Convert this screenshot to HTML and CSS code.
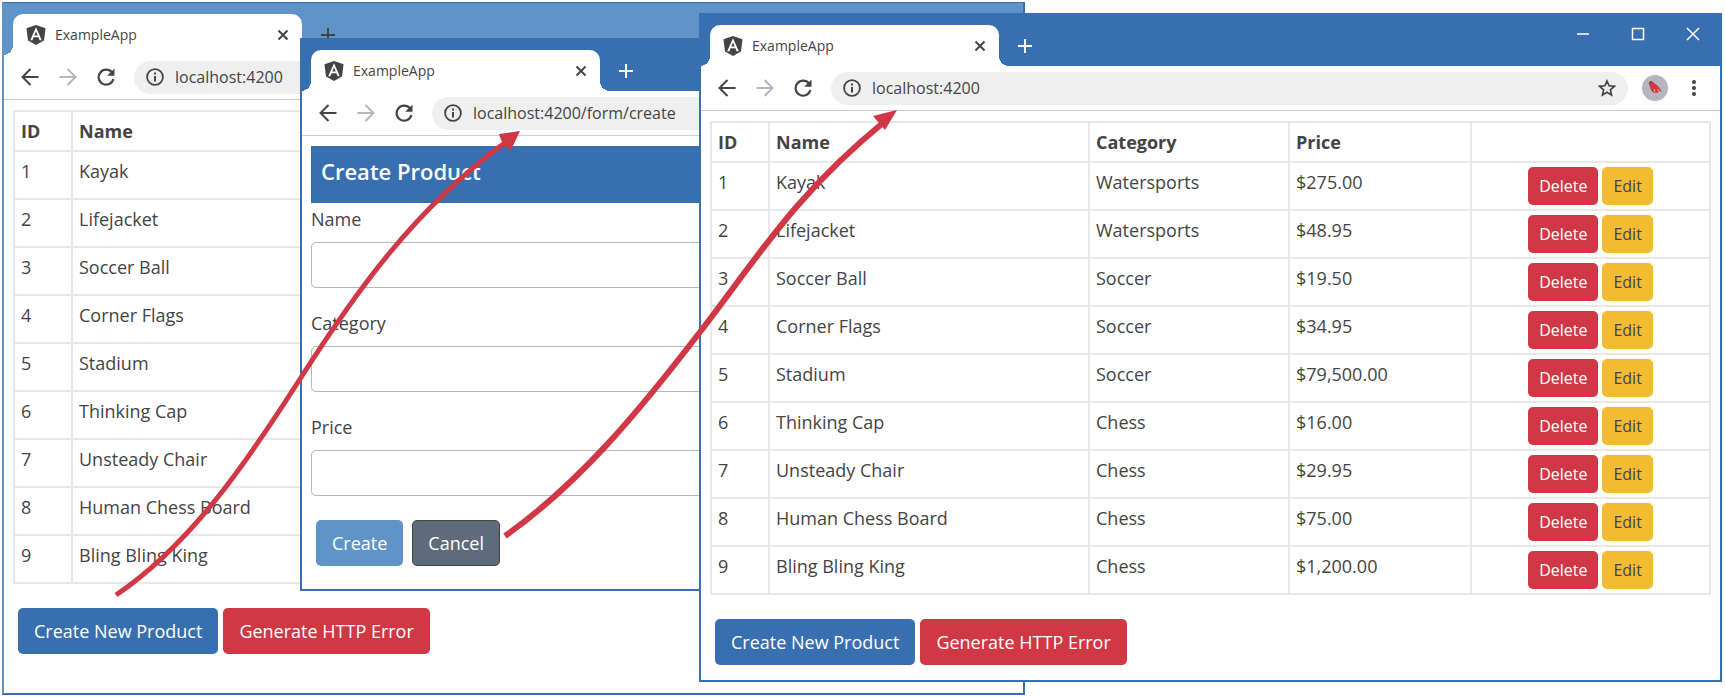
FILE: index.html
```
<!DOCTYPE html>
<html lang="en">
<head>
<meta charset="utf-8">
<title>ExampleApp</title>
<link rel="stylesheet" href="styles.css">
</head>
<body>
<svg class="symbols" aria-hidden="true">
  <symbol id="logo" viewBox="0 0 20 20"><path fill="#444" d="M10 0 19.5 3.3 18 15.6 10 20 2 15.6.5 3.3z"/><path fill="#fff" d="M10 2.3 4.2 15.2h2.2l1.2-2.9h4.8l1.2 2.9h2.2zm0 4.1 1.7 4.1H8.3z"/></symbol>
  <symbol id="close" viewBox="0 0 12 12"><path d="m1.500 1.500 9 9m0-9-9 9" fill="none" stroke="currentColor" stroke-width="2"/></symbol>
  <symbol id="plus" viewBox="0 0 16 16"><path d="M8 1v14M1 8h14" fill="none" stroke="currentColor" stroke-width="2"/></symbol>
  <symbol id="back" viewBox="0 0 18 18"><path d="M17.500 9H2M9.500 1 1.500 9l8 8" fill="none" stroke="currentColor" stroke-width="2"/></symbol>
  <symbol id="forward" viewBox="0 0 18 18"><path d="M.5 9H16M8.500 1l8 8-8 8" fill="none" stroke="currentColor" stroke-width="2"/></symbol>
  <symbol id="reload" viewBox="0 0 18 18"><path d="M15 4.500A7.500 7.500 0 1 0 16.400 11" fill="none" stroke="currentColor" stroke-width="2.200"/><path d="M17.500.5v7.300h-7.300z" fill="currentColor"/></symbol>
  <symbol id="info" viewBox="0 0 18 18"><circle cx="9" cy="9" r="7.900" fill="none" stroke="currentColor" stroke-width="1.800"/><path d="M8 4.500h2v2H8zM8 8h2v5.500H8z" fill="currentColor"/></symbol>
  <symbol id="star" viewBox="0 0 18 18"><path d="m9 2 2.100 4.800 5.200.5-3.900 3.500 1.100 5.100L9 13.200l-4.500 2.700 1.100-5.100-3.900-3.500 5.200-.5z" fill="none" stroke="currentColor" stroke-width="1.700"/></symbol>
  <symbol id="dots" viewBox="0 0 6 18"><g fill="currentColor"><circle cx="3" cy="3" r="2"/><circle cx="3" cy="9" r="2"/><circle cx="3" cy="15" r="2"/></g></symbol>
  <symbol id="bird" viewBox="0 0 26 26"><circle cx="13" cy="13" r="13" fill="#b5b5bf"/><path d="M7 8.500C7 6.500 9 6 11 7l5 4 4 5.500-3-.5-1 1.500c-3 1-6 0-7.500-3.500z" fill="#d03845"/><path d="m7 8.500 1-1.500 2-.5" stroke="#444" fill="none"/><path d="m12 14 1 3m3-3 .5 2" stroke="#f2bc30"/></symbol>
</svg>

<main class="desktop">
  <section class="window window-list">
    <header class="titlebar">
      <div class="tab"><svg class="logo"><use href="#logo"/></svg><span class="tab-title">ExampleApp</span><button class="icon-button" aria-label="Close tab"><svg class="close"><use href="#close"/></svg></button></div>
      <button class="icon-button new-tab" aria-label="New tab"><svg class="plus"><use href="#plus"/></svg></button>
    </header>
    <nav class="toolbar">
      <button class="icon-button" aria-label="Back"><svg class="icon"><use href="#back"/></svg></button>
      <button class="icon-button muted" aria-label="Forward"><svg class="icon"><use href="#forward"/></svg></button>
      <button class="icon-button" aria-label="Reload"><svg class="icon"><use href="#reload"/></svg></button>
      <div class="address"><svg class="icon"><use href="#info"/></svg><span class="url">localhost:4200</span></div>
    </nav>
    <div class="content">
      <table class="products">
        <thead><tr><th class="col-id">ID</th><th>Name</th></tr></thead>
        <tbody>
          <tr><td>1</td><td>Kayak</td></tr>
          <tr><td>2</td><td>Lifejacket</td></tr>
          <tr><td>3</td><td>Soccer Ball</td></tr>
          <tr><td>4</td><td>Corner Flags</td></tr>
          <tr><td>5</td><td>Stadium</td></tr>
          <tr><td>6</td><td>Thinking Cap</td></tr>
          <tr><td>7</td><td>Unsteady Chair</td></tr>
          <tr><td>8</td><td>Human Chess Board</td></tr>
          <tr><td>9</td><td>Bling Bling King</td></tr>
        </tbody>
      </table>
      <div class="actions"><button class="btn primary">Create New Product</button><button class="btn danger">Generate HTTP Error</button></div>
    </div>
  </section>

  <section class="window window-form">
    <header class="titlebar">
      <div class="tab"><svg class="logo"><use href="#logo"/></svg><span class="tab-title">ExampleApp</span><button class="icon-button" aria-label="Close tab"><svg class="close"><use href="#close"/></svg></button></div>
      <button class="icon-button new-tab" aria-label="New tab"><svg class="plus"><use href="#plus"/></svg></button>
    </header>
    <nav class="toolbar">
      <button class="icon-button" aria-label="Back"><svg class="icon"><use href="#back"/></svg></button>
      <button class="icon-button muted" aria-label="Forward"><svg class="icon"><use href="#forward"/></svg></button>
      <button class="icon-button" aria-label="Reload"><svg class="icon"><use href="#reload"/></svg></button>
      <div class="address"><svg class="icon"><use href="#info"/></svg><span class="url">localhost:4200/form/create</span></div>
    </nav>
    <form class="content">
      <h1 class="banner">Create Product</h1>
      <div class="field"><label for="name">Name</label><input id="name" type="text"></div>
      <div class="field"><label for="category">Category</label><input id="category" type="text"></div>
      <div class="field"><label for="price">Price</label><input id="price" type="text"></div>
      <div class="form-actions"><button type="button" class="btn create">Create</button><button type="button" class="btn cancel">Cancel</button></div>
    </form>
  </section>

  <section class="window window-result">
    <header class="titlebar">
      <div class="tab"><svg class="logo"><use href="#logo"/></svg><span class="tab-title">ExampleApp</span><button class="icon-button" aria-label="Close tab"><svg class="close"><use href="#close"/></svg></button></div>
      <button class="icon-button new-tab" aria-label="New tab"><svg class="plus"><use href="#plus"/></svg></button>
      <div class="controls">
        <button class="icon-button" aria-label="Minimize"><svg class="control" viewBox="0 0 14 14"><path d="M1 7h12"/></svg></button>
        <button class="icon-button" aria-label="Maximize"><svg class="control" viewBox="0 0 14 14"><path d="M1.500 1.500h11v11h-11z"/></svg></button>
        <button class="icon-button" aria-label="Close"><svg class="control" viewBox="0 0 14 14"><path d="m1 1 12 12m0-12L1 13"/></svg></button>
      </div>
    </header>
    <nav class="toolbar">
      <button class="icon-button" aria-label="Back"><svg class="icon"><use href="#back"/></svg></button>
      <button class="icon-button muted" aria-label="Forward"><svg class="icon"><use href="#forward"/></svg></button>
      <button class="icon-button" aria-label="Reload"><svg class="icon"><use href="#reload"/></svg></button>
      <div class="address"><svg class="icon"><use href="#info"/></svg><span class="url">localhost:4200</span><button class="icon-button" aria-label="Bookmark"><svg class="icon"><use href="#star"/></svg></button></div>
      <div class="toolbar-end">
        <button class="icon-button" aria-label="Profile"><svg class="avatar"><use href="#bird"/></svg></button>
        <button class="icon-button" aria-label="Menu"><svg class="dots"><use href="#dots"/></svg></button>
      </div>
    </nav>
    <div class="content">
      <table class="products">
        <thead><tr><th class="col-id">ID</th><th>Name</th><th class="col-category">Category</th><th class="col-price">Price</th><th class="col-actions"></th></tr></thead>
        <tbody>
          <tr><td>1</td><td>Kayak</td><td>Watersports</td><td>$275.00</td><td class="row-actions"><button class="btn-sm danger">Delete</button><button class="btn-sm warning">Edit</button></td></tr>
          <tr><td>2</td><td>Lifejacket</td><td>Watersports</td><td>$48.95</td><td class="row-actions"><button class="btn-sm danger">Delete</button><button class="btn-sm warning">Edit</button></td></tr>
          <tr><td>3</td><td>Soccer Ball</td><td>Soccer</td><td>$19.50</td><td class="row-actions"><button class="btn-sm danger">Delete</button><button class="btn-sm warning">Edit</button></td></tr>
          <tr><td>4</td><td>Corner Flags</td><td>Soccer</td><td>$34.95</td><td class="row-actions"><button class="btn-sm danger">Delete</button><button class="btn-sm warning">Edit</button></td></tr>
          <tr><td>5</td><td>Stadium</td><td>Soccer</td><td>$79,500.00</td><td class="row-actions"><button class="btn-sm danger">Delete</button><button class="btn-sm warning">Edit</button></td></tr>
          <tr><td>6</td><td>Thinking Cap</td><td>Chess</td><td>$16.00</td><td class="row-actions"><button class="btn-sm danger">Delete</button><button class="btn-sm warning">Edit</button></td></tr>
          <tr><td>7</td><td>Unsteady Chair</td><td>Chess</td><td>$29.95</td><td class="row-actions"><button class="btn-sm danger">Delete</button><button class="btn-sm warning">Edit</button></td></tr>
          <tr><td>8</td><td>Human Chess Board</td><td>Chess</td><td>$75.00</td><td class="row-actions"><button class="btn-sm danger">Delete</button><button class="btn-sm warning">Edit</button></td></tr>
          <tr><td>9</td><td>Bling Bling King</td><td>Chess</td><td>$1,200.00</td><td class="row-actions"><button class="btn-sm danger">Delete</button><button class="btn-sm warning">Edit</button></td></tr>
        </tbody>
      </table>
      <div class="actions"><button class="btn primary">Create New Product</button><button class="btn danger">Generate HTTP Error</button></div>
    </div>
  </section>

  <svg class="arrows" width="1000" height="697" viewBox="0 0 1000 697" aria-hidden="true">
    <path class="line" stroke-width="5" d="M116 595C190 545 245 465 300 379S415 208 506 142"/>
    <path class="head" d="m520 131-21 3 2 6 6 8 4 2z"/>
    <path class="line" stroke-width="6" d="M505 536C580 483 640 410 700 332S795 195 884 122"/>
    <path class="head" d="m897 110-24 6 12 14z"/>
  </svg>
</main>
</body>
</html>
```
FILE: styles.css
```
* { box-sizing: border-box; }

body {
  margin: 0;
  background: #fff;
  color: #444;
  font: 18px/28px "Open Sans", "Noto Sans", sans-serif;
}

button, input { font: inherit; color: inherit; }
svg { display: block; }
.symbols { position: absolute; width: 0; height: 0; }

.desktop { position: relative; min-height: 697px; overflow: hidden; }

/* Browser windows */
.window {
  position: absolute;
  background: #fff;
  border: 2px solid #386fb1;
  border-top-width: 1px;
}
.window-list { left: 2px; right: 700px; top: 2px; padding-bottom: 29px; border-left-color: #6094c8; }
.window-form { left: 300px; right: 1000px; top: 38px; padding-bottom: 1px; }
.window-result { left: 699px; right: 3px; top: 13px; padding-bottom: 5px; }

.titlebar { display: flex; height: 52px; padding: 11px 0 0 9px; background: #386fb1; }
.window-list .titlebar { background: #6094c8; }

.tab {
  position: relative;
  display: flex;
  align-items: center;
  gap: 9px;
  width: 289px;
  padding: 0 13px;
  border-radius: 10px 10px 0 0;
  background: #fff;
}
.tab::before, .tab::after {
  content: "";
  position: absolute;
  bottom: 0;
  width: 10px;
  height: 10px;
}
.tab::before { right: 100%; background: radial-gradient(circle at 0 0, transparent 10px, #fff 10px); }
.tab::after { left: 100%; background: radial-gradient(circle at 100% 0, transparent 10px, #fff 10px); }
.tab-title { flex: 1; font-size: 14px; line-height: 20px; }
.logo { width: 20px; height: 20px; }
.close { width: 12px; height: 12px; }
.plus { width: 16px; height: 16px; }
.new-tab { margin-left: 18px; color: #fff; }
.window-list .new-tab { color: #444; }

.icon-button {
  display: grid;
  place-items: center;
  padding: 0;
  border: 0;
  background: none;
}

.controls { display: flex; align-items: center; gap: 41px; height: 18px; margin-left: auto; padding-right: 20px; }
.control { width: 14px; height: 14px; fill: none; stroke: #fff; stroke-width: 1.5; }

.toolbar {
  display: flex;
  align-items: center;
  gap: 20px;
  height: 45px;
  padding: 0 23px 0 17px;
  border-bottom: 1px solid #ccc;
}
.icon { width: 18px; height: 18px; }
.muted { color: #b5b5bf; }
.toolbar-end { display: flex; align-items: center; gap: 23px; }
.avatar { width: 26px; height: 26px; }
.dots { width: 6px; height: 18px; }
.address {
  flex: 1;
  display: flex;
  align-items: center;
  gap: 11px;
  height: 33px;
  margin: 0 -6px 0 -1px;
  padding: 0 12px;
  border-radius: 17px;
  background: #efefef;
}
.url { flex: 1; font-size: 16px; line-height: 24px; white-space: nowrap; }
.window-form .toolbar { padding-right: 0; }

.content { padding: 10px 9px; }

/* Product table */
.products { width: 100%; border-collapse: collapse; table-layout: fixed; }
.products th, .products td { padding: 5px 6px; border: 2px solid #e8e8e8; text-align: left; vertical-align: top; }
.products tr { height: 48px; }
.products thead tr { height: 40px; }
.products .row-actions { padding: 4px; text-align: center; line-height: 0; }
.col-id { width: 58px; }
.col-category { width: 200px; }
.col-price { width: 182px; }
.col-actions { width: 239px; }

/* Buttons */
.btn { height: 46px; padding: 0 15px; border: 1px solid transparent; border-radius: 5px; color: #fff; }
.btn-sm { height: 38px; padding: 0 11px; border: 0; border-radius: 5px; font-size: 16px; line-height: 24px; }
.btn-sm + .btn-sm { margin-left: 4px; }
.primary { background: #386fb1; }
.danger { background: #d03845; color: #fff; }
.warning { background: #f2bc30; }
.create { background: #6094c8; }
.cancel { background: #5f6b7a; border-color: #444; }
.actions { display: flex; gap: 5px; padding: 24px 5px 0; }

/* Product form */
.banner { margin: 0; padding: 10px 10px 16px; background: #386fb1; color: #fff; font-size: 22px; line-height: 31px; font-weight: 600; }
.field { display: flex; flex-direction: column; gap: 9px; padding-top: 2px; margin-bottom: 19px; }
.field input { width: 100%; height: 46px; padding: 0 12px; border: 1px solid #b5b5bf; border-radius: 5px; background: #fff; }
.form-actions { display: flex; gap: 9px; padding: 5px 5px 12px; }

/* Flow arrows between windows */
.arrows { position: absolute; left: 0; top: 0; pointer-events: none; }
.line { fill: none; stroke: #d03845; }
.head { fill: #d03845; }
```
